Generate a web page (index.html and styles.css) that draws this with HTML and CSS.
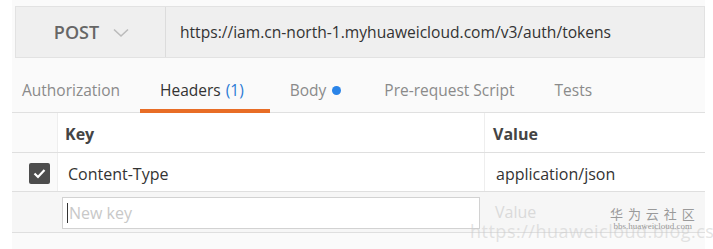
FILE: index.html
```html
<!DOCTYPE html>
<html>
<head>
<meta charset="utf-8">
<link rel="stylesheet" href="styles.css">
</head>
<body>
<div class="app">
  <div class="urlbar">
    <div class="method">POST
      <svg class="chev" width="16" height="10" viewBox="0 0 16 10"><path d="M1 1.5 L8 8 L15 1.5" fill="none" stroke="#bbb" stroke-width="1.6"/></svg>
    </div>
    <div class="url">https://iam.cn-north-1.myhuaweicloud.com/v3/auth/tokens</div>
  </div>
  <div class="tabs">
    <div class="tab t-auth">Authorization</div>
    <div class="tab active">Headers <span class="count">(1)</span></div>
    <div class="tab t-body">Body <span class="dot"></span></div>
    <div class="tab t-pre">Pre-request Script</div>
    <div class="tab">Tests</div>
  </div>
  <div class="table">
    <div class="row head">
      <div class="cell chk"></div>
      <div class="cell key">Key</div>
      <div class="cell val">Value</div>
    </div>
    <div class="row data">
      <div class="cell chk"><span class="box"><svg width="13" height="11" viewBox="0 0 13 11"><path d="M1.5 5.5 L5 9 L11.5 2" fill="none" stroke="#fff" stroke-width="2.2"/></svg></span></div>
      <div class="cell key">Content-Type</div>
      <div class="cell val">application/json</div>
    </div>
    <div class="row newrow">
      <div class="cell chk"></div>
      <div class="cell key"><div class="input"><span class="caret"></span>New key</div></div>
      <div class="cell val ph">Value</div>
    </div>
  </div>
  <div class="wm-url">https://huaweicloud.blog.csdn.net</div>
  <div class="wm-logo">
    <div class="wm-cn">华 为 云 社 区</div>
    <div class="wm-en">bbs.huaweicloud.com</div>
  </div>
</div>
</body>
</html>
```

FILE: styles.css
```css
html, body {
  margin: 0;
  padding: 0;
  background: #fff;
  overflow: hidden;
}
body {
  font-family: "Open Sans", "Liberation Sans", sans-serif;
  color: #333;
}
.app {
  position: relative;
  margin-left: 12px;
  width: 693px;
  height: 249px;
  background: #fafafa;
  padding-top: 6px;
  box-sizing: border-box;
}
.urlbar {
  display: flex;
  margin-left: 3px;
  height: 52px;
  box-sizing: border-box;
  border: 1px solid #e2e2e2;
  background: #efefef;
}
.method {
  width: 150px;
  box-sizing: border-box;
  border-right: 1px solid #dcdcdc;
  display: flex;
  align-items: center;
  justify-content: center;
  gap: 14px;
  font-size: 18px;
  font-weight: 600;
  color: #666;
  padding-left: 2px;
}
.chev { margin-top: 1px; }
.url {
  flex: 1;
  display: flex;
  align-items: center;
  padding-left: 14px;
  font-size: 15.6px;
  color: #333;
}
.tabs {
  display: flex;
  height: 55px;
  border-bottom: 1px solid #e0e0e0;
  box-sizing: border-box;
  padding-left: 10px;
}
.tab {
  font-size: 15.5px;
  color: #8a8a8a;
  display: flex;
  align-items: center;
  padding-top: 12px;
  box-sizing: border-box;
  height: 55px;
  border-bottom: 4px solid transparent;
}
.t-auth { margin-right: 20px; }
.tab.active {
  color: #333;
  border-bottom-color: #e86d26;
  padding-left: 20px;
  padding-right: 26px;
  margin-right: 20px;
}
.t-body { margin-right: 43px; }
.t-pre { margin-right: 40px; }
.count { color: #2a7ad5; margin-left: 5px; }
.dot {
  display: inline-block;
  width: 9px;
  height: 9px;
  border-radius: 50%;
  background: #2a84e8;
  margin-left: 6px;
  margin-top: 2px;
}
.row {
  display: grid;
  grid-template-columns: 45px 427px 1fr;
  border-bottom: 1px solid #dfdfdf;
}
.head { height: 39px; }
.data { height: 38px; }
.newrow { height: 40px; background: #f6f6f6; }
.cell {
  display: flex;
  align-items: center;
  font-size: 16px;
}
.head .cell { padding-top: 2px; }
.data .cell { padding-top: 3px; }
.head .key, .head .val { font-weight: 700; color: #444; }
.head .key, .data .key { background: #fff; border-left: 1px solid #eee; }
.head .val, .data .val { background: #fff; border-left: 1px solid #eee; }
.key { padding-left: 7px; }
.data .key { padding-left: 10px; }
.val { padding-left: 8px; }
.data .val { padding-left: 11px; }
.box {
  width: 21px;
  height: 21px;
  border-radius: 2px;
  background: #4d4d4d;
  margin-left: 17px;
  display: flex;
  align-items: center;
  justify-content: center;
}
.newrow .key { padding-left: 5px; padding-right: 4px; }
.input {
  flex: 1;
  height: 32px;
  box-sizing: border-box;
  background: #fff;
  border: 1px solid #d2d2d2;
  display: flex;
  align-items: center;
  padding-left: 4px;
  color: #c8c8c8;
  font-size: 16px;
  margin-top: 1px;
}
.caret {
  width: 1px;
  height: 20px;
  background: #333;
  margin-right: 1px;
}
.ph { color: #dadada; padding-left: 11px; padding-bottom: 1px; }
.wm-url {
  position: absolute;
  left: 458px;
  top: 219px;
  width: 243px;
  overflow: hidden;
  font-size: 18px;
  color: rgba(200,200,200,0.5);
  white-space: nowrap;
  letter-spacing: 0.5px;
}
.wm-logo {
  position: absolute;
  left: 598px;
  top: 206px;
  text-align: center;
}
.wm-cn {
  font-family: "Noto Sans CJK SC", sans-serif;
  font-size: 13px;
  color: #9a9a9a;
  line-height: 15px;
  letter-spacing: 1px;
}
.wm-en {
  font-family: "Liberation Serif", serif;
  font-size: 9px;
  color: #999;
  line-height: 11px;
}
```
